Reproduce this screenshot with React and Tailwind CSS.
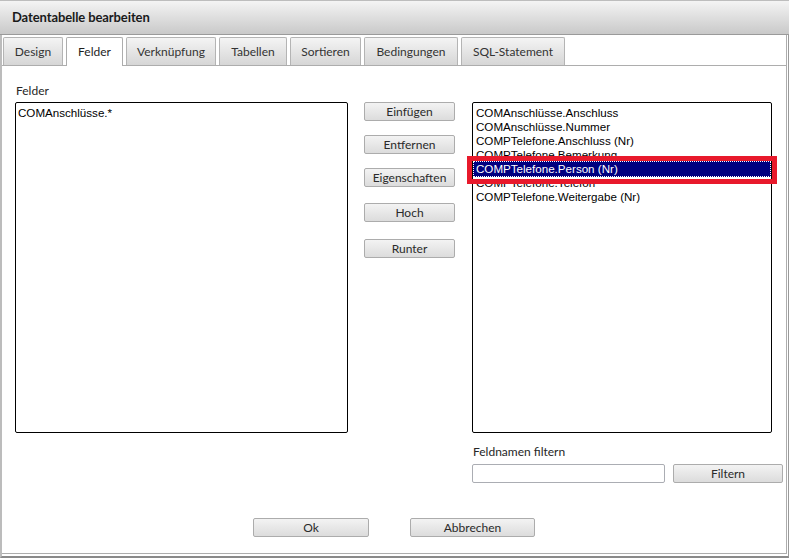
import { useState } from 'react'

const tabs = ['Design', 'Felder', 'Verknüpfung', 'Tabellen', 'Sortieren', 'Bedingungen', 'SQL-Statement']
const tabWidths = {
  Design: 'w-[60px]',
  Felder: 'w-[57px]',
  Verknüpfung: 'w-[90px]',
  Tabellen: 'w-[68px]',
  Sortieren: 'w-[71px]',
  Bedingungen: 'w-[94px]',
  'SQL-Statement': 'w-[104px]',
}

const fields = [
  'COMAnschlüsse.Anschluss',
  'COMAnschlüsse.Nummer',
  'COMPTelefone.Anschluss (Nr)',
  'COMPTelefone.Bemerkung',
  'COMPTelefone.Person (Nr)',
  'COMPTelefone.Telefon',
  'COMPTelefone.Weitergabe (Nr)',
]

const ui = { fontFamily: 'Lato, "Noto Sans", sans-serif' }
const listFont = { fontFamily: '"Liberation Sans", Arial, sans-serif' }

function Btn({ children, className = '' }) {
  return (
    <button
      className={`shrink-0 h-[19px] rounded-[2px] border border-[#acacac] bg-gradient-to-b from-[#f3f3f3] to-[#dcdcdc] text-[12px] leading-none text-[#2a2a2a] ${className}`}
      style={ui}
    >
      {children}
    </button>
  )
}

export default function App() {
  const [active, setActive] = useState('Felder')
  const [selected, setSelected] = useState(4)

  return (
    <div className="w-[789px] h-[558px] flex flex-col bg-white overflow-hidden" style={ui}>
      {/* title bar */}
      <div className="h-[35px] shrink-0 flex items-center pl-[12px] border-t border-b border-t-[#bdbdbd] border-b-[#9a9a9a] bg-gradient-to-b from-[#f4f4f4] to-[#c9c9c9]">
        <span className="text-[13px] font-bold text-[#1a1a1a] tracking-[-0.1px]">Datentabelle bearbeiten</span>
      </div>

      <div className="flex-1 flex flex-col border-l-2 border-l-[#bcbcbc] border-r border-r-[#9a9a9a] border-b-2 border-b-[#8a8a8a]">
        <div className="flex-1 flex flex-col mr-px mb-[2px] border-r border-[#adadad]">
          {/* tabs */}
          <div className="h-[30px] shrink-0 flex items-end gap-[3px] pl-px">
            {tabs.map((t) =>
              t === active ? (
                <div
                  key={t}
                  onClick={() => setActive(t)}
                  className={`${tabWidths[t]} shrink-0 h-[29px] -mb-px relative z-10 flex items-center justify-center rounded-t-[2px] border border-b-0 border-[#adadad] bg-white text-[12px] text-[#1e1e1e]`}
                >
                  {t}
                </div>
              ) : (
                <div
                  key={t}
                  onClick={() => setActive(t)}
                  className={`${tabWidths[t]} shrink-0 h-[28px] flex items-center justify-center rounded-t-[2px] border border-b-0 border-[#b4b4b4] bg-gradient-to-b from-[#f4f4f4] to-[#d6d6d6] text-[12px] text-[#333]`}
                >
                  {t}
                </div>
              )
            )}
          </div>

          {/* panel */}
          <div className="flex-1 flex flex-col border-t border-b border-[#adadad] pt-[17px]">
            <div className="pl-[13px] flex">
              {/* left column */}
              <div className="w-[333px] shrink-0 flex flex-col">
                <div className="h-[19px] pl-px text-[12px] leading-[16px] text-[#262626]">Felder</div>
                <div className="h-[331px] rounded-[2px] border border-black pt-[3px] pl-[2px]" style={listFont}>
                  <div className="text-[11.6px] leading-[14px] text-black">COMAnschlüsse.*</div>
                </div>
              </div>

              {/* button column */}
              <div className="ml-[16px] w-[91px] shrink-0 flex flex-col pt-[19px]">
                <Btn>Einfügen</Btn>
                <Btn className="mt-[14px]">Entfernen</Btn>
                <Btn className="mt-[14px]">Eigenschaften</Btn>
                <Btn className="mt-[16px]">Hoch</Btn>
                <Btn className="mt-[17px]">Runter</Btn>
              </div>

              {/* right column */}
              <div className="ml-[17px] w-[311px] shrink-0 flex flex-col pt-[19px]">
                <div className="relative w-[300px] h-[331px] rounded-[2px] border border-black pt-[3px]" style={listFont}>
                  {fields.map((f, i) =>
                    i === selected ? (
                      <div
                        key={f}
                        onClick={() => setSelected(i)}
                        className="h-[16px] -my-px bg-[#000080] outline outline-1 outline-dotted outline-white -outline-offset-1 pl-[3px] text-[11.6px] leading-[16px] text-white"
                      >
                        {f}
                      </div>
                    ) : (
                      <div
                        key={f}
                        onClick={() => setSelected(i)}
                        className="h-[14px] pl-[3px] text-[11.6px] leading-[14px] text-black"
                      >
                        {f}
                      </div>
                    )
                  )}
                  <div className="absolute left-[-6px] top-[53px] w-[310px] h-[28px] border-[5px] border-[#e8192b] pointer-events-none" />
                </div>
                <div className="mt-[11px] h-[16px] pl-px text-[12px] leading-[16px] text-[#262626]">Feldnamen filtern</div>
                <div className="mt-[4px] flex gap-[8px]">
                  <input className="w-[193px] h-[19px] rounded-[2px] border border-[#abadb3] bg-white outline-none" />
                  <Btn className="w-[110px]">Filtern</Btn>
                </div>
              </div>
            </div>

            {/* bottom buttons */}
            <div className="mt-[35px] flex justify-center gap-[41px]">
              <Btn className="w-[116px]">Ok</Btn>
              <Btn className="w-[125px]">Abbrechen</Btn>
            </div>
          </div>
        </div>
      </div>
    </div>
  )
}
